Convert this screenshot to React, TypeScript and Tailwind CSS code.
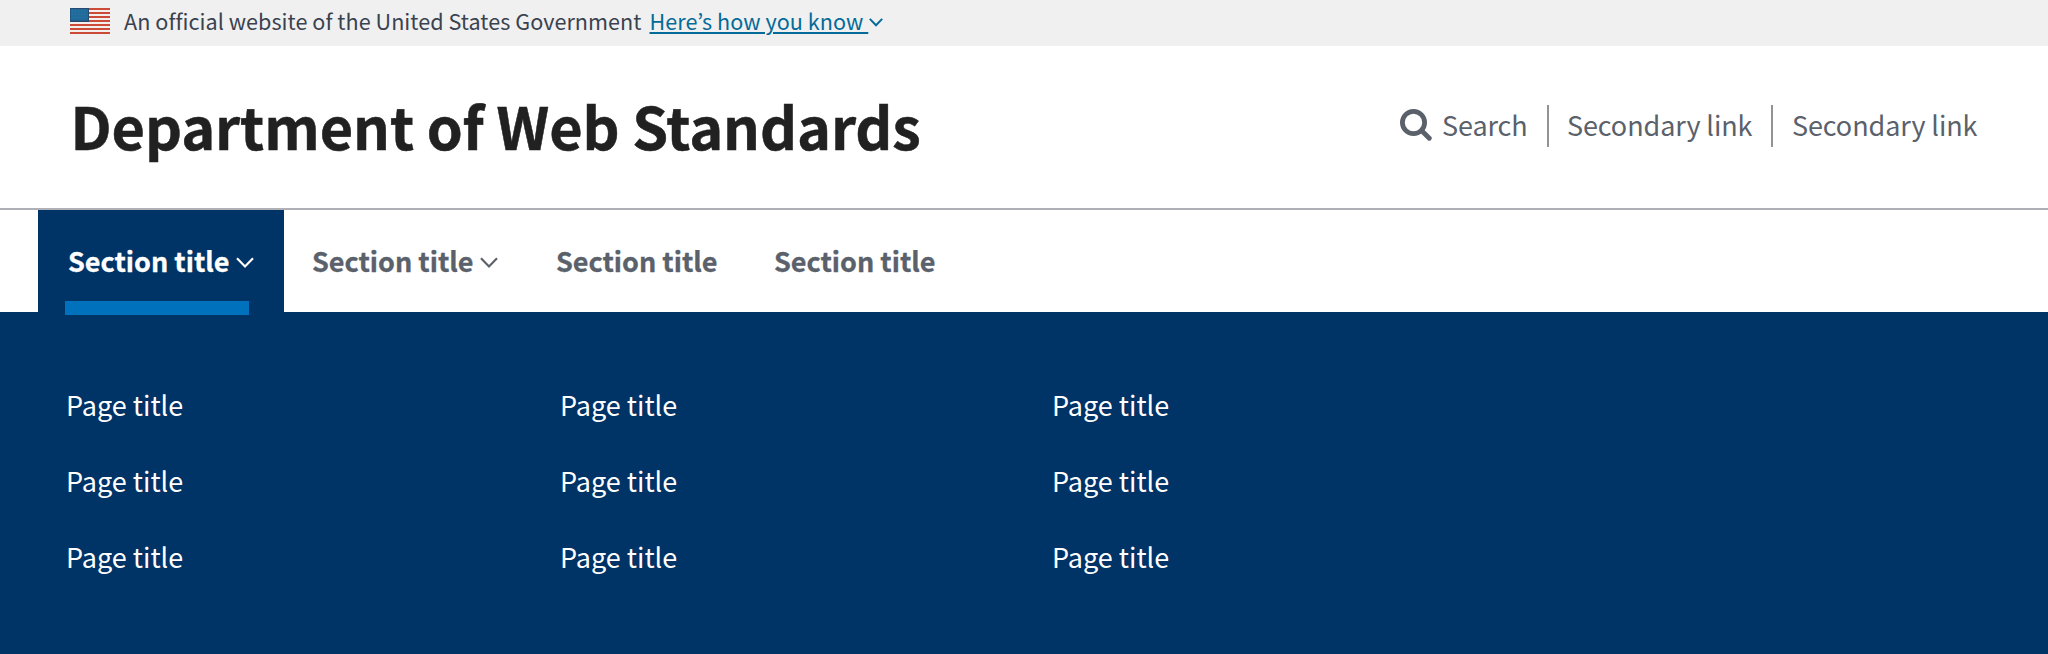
function Chevron({ className }: { className: string }) {
  return (
    <svg viewBox="0 0 18 11" fill="none" stroke="currentColor" className={className}>
      <path d="M1 1.2L9 9.4L17 1.2" />
    </svg>
  );
}

const stripes = [0, 4, 8, 12, 16, 20, 24];

function Flag() {
  return (
    <svg viewBox="0 0 40 26" className="h-[26px] w-10">
      <rect width="40" height="26" fill="#f4efed" />
      {stripes.map((y) => (
        <rect key={y} y={y} width="40" height="2" fill="#cb4b38" />
      ))}
      <rect width="19" height="14" fill="#29486f" />
      <rect x="0.5" y="1" width="17.5" height="11.5" fill="#1f6c9c" />
      <path d="M2 3.5H17M2 6.5H17M2 9.5H17" stroke="#3577a3" strokeWidth="1" strokeDasharray="1 2" />
    </svg>
  );
}

function SearchIcon() {
  return (
    <svg viewBox="0 0 32 32" fill="none" stroke="currentColor" className="mt-1 h-8 w-8">
      <circle cx="13.5" cy="13.5" r="11.1" strokeWidth="4.8" />
      <path d="M21.5 21.5L29.3 29.3" strokeWidth="4.8" strokeLinecap="round" />
    </svg>
  );
}

const rows = ['a', 'b', 'c'];

function PageColumn() {
  return (
    <ul>
      {rows.map((row) => (
        <li key={row} className="h-[76px]">Page title</li>
      ))}
    </ul>
  );
}

export default function App() {
  return (
    <div className="h-[654px] w-[2048px] overflow-hidden bg-white font-['Noto_Sans_CJK_KR',sans-serif]">
      <div className="flex h-[46px] items-start bg-[#f0f0f0] pt-[5px] pl-[70px] text-[21.6px] leading-[31px] tracking-[0.04px]">
        <div className="mt-[3px]"><Flag /></div>
        <span className="ml-[14px] w-[525.5px] whitespace-nowrap text-[#3a424f]">
          An official website of the United States Government
        </span>
        <a className="whitespace-pre text-[#046b99] underline decoration-2 underline-offset-[2px]">{'Here’s how you know\u00a0'}</a>
        <Chevron className="mt-[13px] ml-[1px] h-[8.5px] w-[14px] stroke-[2.5] text-[#046b99]" />
      </div>
      <header className="flex h-[164px] items-start border-b-2 border-[#aeb0b5] pl-[70.5px]">
        <h1 className="w-[1329.5px] pt-[37px] text-[57.6px] leading-[84px] font-bold tracking-[-0.08px] text-[#212121] [-webkit-text-stroke:0.5px_#212121] [word-spacing:-0.3px]">
          Department of Web Standards
        </h1>
        <div className="mt-[59px] flex h-[42px] text-[27px] leading-[39px] tracking-[-0.1px] text-[#5b616b]">
          <SearchIcon />
          <span className="w-[115px] pl-[10px]">Search</span>
          <span className="w-[224px] border-l-2 border-[#919396] pl-[18px]">Secondary link</span>
          <span className="border-l-2 border-[#919396] pl-[19px]">Secondary link</span>
        </div>
      </header>
      <nav className="flex h-[102px] pl-[38px] text-[27px] leading-[39px] font-bold text-[#5b616b] [-webkit-text-stroke:0.3px_currentColor]">
        <div className="relative flex w-[246px] bg-[#003366] pt-[31px] pl-[30px] text-white">
          <span className="w-[168px]">Section title</span>
          <Chevron className="mt-[16px] h-[11px] w-[18px] stroke-[2.2]" />
          <div className="absolute top-[91px] left-[27px] h-[14px] w-[184px] bg-[#0071bc]" />
        </div>
        <div className="flex w-[244px] pt-[31px] pl-[28px]">
          <span className="w-[168px]">Section title</span>
          <Chevron className="mt-[16px] h-[11px] w-[18px] stroke-[2.2]" />
        </div>
        <div className="w-[218px] pt-[31px] pl-[28px]">Section title</div>
        <div className="pt-[31px] pl-[28px]">Section title</div>
      </nav>
      <div className="grid h-[342px] grid-cols-[494px_492px_492px] bg-[#003366] pt-[73px] pl-[66px] text-[27px] leading-[39px] text-white">
        <PageColumn />
        <PageColumn />
        <PageColumn />
      </div>
    </div>
  );
}
